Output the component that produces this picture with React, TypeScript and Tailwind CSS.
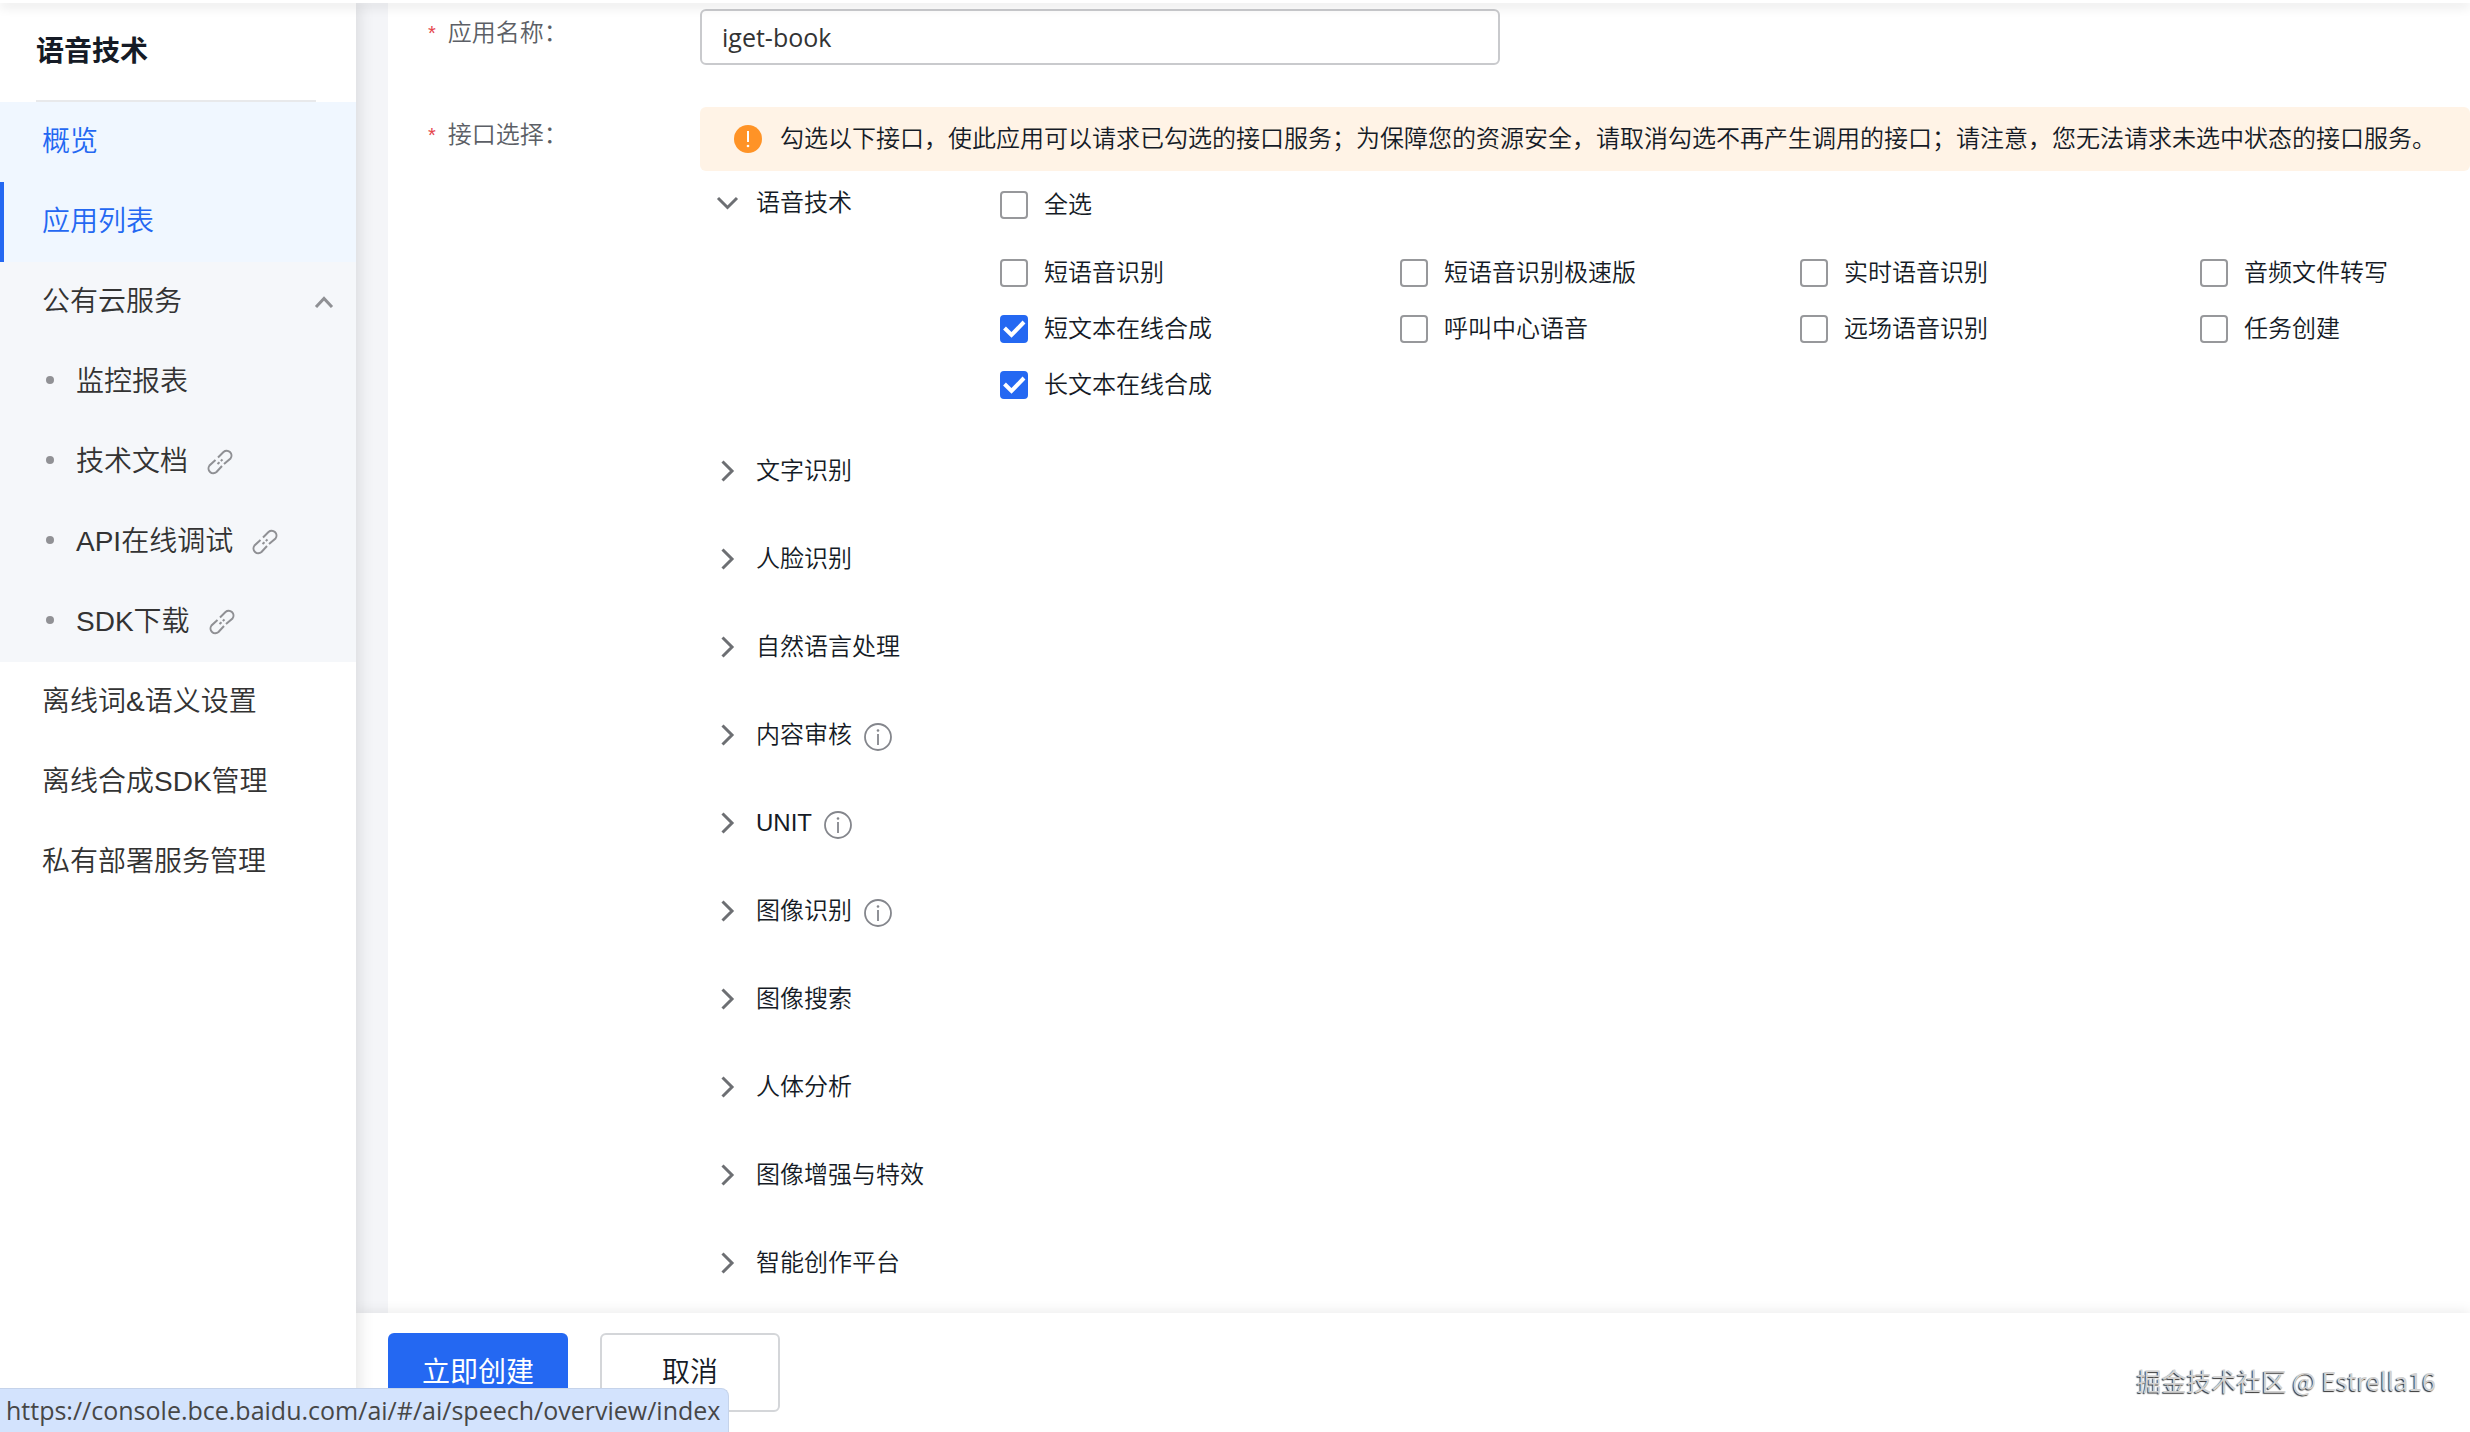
import { useState } from "react";

const SUB_ITEMS = [
  { label: "监控报表", external: false },
  { label: "技术文档", external: true },
  { label: "API在线调试", external: true },
  { label: "SDK下载", external: true },
];

const OTHER_ITEMS = ["离线词&语义设置", "离线合成SDK管理", "私有部署服务管理"];

const SPEECH_APIS = [
  "短语音识别",
  "短语音识别极速版",
  "实时语音识别",
  "音频文件转写",
  "短文本在线合成",
  "呼叫中心语音",
  "远场语音识别",
  "任务创建",
  "长文本在线合成",
];

const GROUPS = [
  { label: "文字识别", info: false },
  { label: "人脸识别", info: false },
  { label: "自然语言处理", info: false },
  { label: "内容审核", info: true },
  { label: "UNIT", info: true },
  { label: "图像识别", info: true },
  { label: "图像搜索", info: false },
  { label: "人体分析", info: false },
  { label: "图像增强与特效", info: false },
  { label: "智能创作平台", info: false },
];

export default function App() {
  const [name, setName] = useState("iget-book");
  const [checked, setChecked] = useState<string[]>(["短文本在线合成", "长文本在线合成"]);

  const toggle = (api: string) =>
    setChecked((prev) => (prev.includes(api) ? prev.filter((a) => a !== api) : [...prev, api]));

  const allChecked = checked.length === SPEECH_APIS.length;

  return (
    <div className="relative flex h-screen flex-col overflow-hidden bg-[#f4f5f8] font-['Liberation_Sans','Noto_Sans_CJK_SC',sans-serif] text-2xl font-[350] text-[#151b26]">
      <header className="relative z-20 h-[3px] shrink-0 bg-white shadow-[0_2px_12px_rgba(0,0,0,0.24)]" />

      <div className="flex min-h-0 flex-1">
        <Sidebar />

        <div className="flex min-w-0 flex-1 flex-col">
          <main className="ml-8 min-h-0 flex-1 overflow-hidden bg-white pl-10 pt-1.5">
            <form>
              <div className="flex items-start">
                <FieldLabel htmlFor="app-name" text="应用名称：" />
                <input
                  id="app-name"
                  type="text"
                  value={name}
                  onChange={(e) => setName(e.target.value)}
                  className="h-14 w-[800px] rounded-md border-2 border-[#c9cacd] bg-white px-5 font-['Open_Sans',sans-serif] text-[25px] font-normal text-[#333] outline-none"
                />
              </div>

              <div className="mt-[42px] flex items-start">
                <div className="pt-1">
                  <FieldLabel text="接口选择：" />
                </div>
                <div className="min-w-0 flex-1">
                  <div className="flex h-16 items-center gap-[18px] whitespace-nowrap rounded-md bg-[#fff3e6] pl-[34px]">
                    <WarnIcon />
                    <p>
                      勾选以下接口，使此应用可以请求已勾选的接口服务；为保障您的资源安全，请取消勾选不再产生调用的接口；请注意，您无法请求未选中状态的接口服务。
                    </p>
                  </div>

                  {/* 语音技术 */}
                  <section className="flex h-64 items-start">
                    <div className="w-[300px] shrink-0 pt-3.5">
                      <GroupButton label="语音技术" open />
                    </div>
                    <div className="flex-1 pt-1.5">
                      <Check label="全选" checked={allChecked} onChange={() => setChecked(allChecked ? [] : SPEECH_APIS)} />
                      <div className="mt-3 grid grid-cols-[repeat(4,400px)]">
                        {SPEECH_APIS.map((api) => (
                          <Check key={api} label={api} checked={checked.includes(api)} onChange={() => toggle(api)} />
                        ))}
                      </div>
                    </div>
                  </section>

                  {GROUPS.map((g) => (
                    <section key={g.label} className="flex h-[88px] items-center gap-3">
                      <GroupButton label={g.label} />
                      {g.info && <InfoIcon />}
                    </section>
                  ))}
                </div>
              </div>
            </form>
          </main>

          <footer className="relative flex shrink-0 items-center gap-8 bg-white py-5 pr-[34px] pl-8 shadow-[0_-2px_12px_rgba(0,0,0,0.08)]">
            <button type="button" className="h-[79px] w-[180px] rounded-md bg-[#2468f2] text-[28px] font-normal text-white">
              立即创建
            </button>
            <button type="button" className="h-[79px] w-[180px] rounded-md border-2 border-[#d4d6d9] bg-white text-[28px]">
              取消
            </button>
            <p className="ml-auto pt-4 font-['Noto_Sans_CJK_SC',sans-serif] text-[25px] font-normal text-[#d2d2d2] [text-shadow:-1px_1px_1px_#333]">
              掘金技术社区 @ Estrella16
            </p>
          </footer>
        </div>
      </div>

      {/* Browser status bubble */}
      <div className="absolute bottom-0 left-0 z-30 flex h-11 items-center rounded-tr-lg border-r border-t border-[#c5d3ea] bg-[#d3e3fd] pl-1.5 pr-2 font-['Open_Sans',sans-serif] text-[25px] font-normal text-[#474747]">
        https://console.bce.baidu.com/ai/#/ai/speech/overview/index
      </div>
    </div>
  );
}

function Sidebar() {
  return (
    <aside className="relative z-10 w-[356px] shrink-0 bg-white text-[28px] text-[#333] shadow-[2px_0_16px_rgba(0,0,0,0.12)]">
      <div className="mr-10 ml-9 flex h-[99px] items-center border-b-2 border-[#e8e9eb]">
        <h1 className="font-bold text-[#151b26]">语音技术</h1>
      </div>
      <nav>
        <a href="#overview" className="flex h-20 items-center bg-[#f0f7ff] pl-[42px] text-[#2468f2]">
          概览
        </a>
        <a href="#apps" className="flex h-20 items-center border-l-4 border-[#2468f2] bg-[#f0f7ff] pl-[38px] text-[#2468f2]">
          应用列表
        </a>
        <div className="bg-[#f5f7fa]">
          <button type="button" className="flex h-20 w-full items-center justify-between pr-[22px] pl-[42px]">
            公有云服务
            <svg width="20" height="12" viewBox="0 0 20 12" fill="none" stroke="#8f9094" strokeWidth="3">
              <path d="M2 11 10 2.500 18 11" />
            </svg>
          </button>
          {SUB_ITEMS.map((item) => (
            <a key={item.label} href="#docs" className="flex h-20 items-center pl-[46px]">
              <span className="mr-[22px] mb-1 size-2 rounded-full bg-[#909195]" />
              {item.label}
              {item.external && <LinkIcon />}
            </a>
          ))}
        </div>
        {OTHER_ITEMS.map((label) => (
          <a key={label} href="#more" className="flex h-20 items-center pl-[42px]">
            {label}
          </a>
        ))}
      </nav>
    </aside>
  );
}

function FieldLabel({ text, htmlFor }: { text: string; htmlFor?: string }) {
  return (
    <label htmlFor={htmlFor} className="flex h-12 w-[272px] shrink-0 items-center gap-3 text-[#5c5f66]">
      <span className="text-xl text-[#e5454c]">*</span>
      {text}
    </label>
  );
}

function GroupButton({ label, open = false }: { label: string; open?: boolean }) {
  return (
    <button type="button" className="flex h-9 items-center gap-4 pl-4">
      <svg width="24" height="24" viewBox="0 0 24 24" fill="none" stroke="#6d6f73" strokeWidth="3">
        <path d={open ? "M2 7 11.500 16.500 21 7" : "M6.500 2.500 16 12 6.500 21.500"} />
      </svg>
      {label}
    </button>
  );
}

function Check({ label, checked, onChange }: { label: string; checked: boolean; onChange: () => void }) {
  return (
    <label className="flex h-14 items-center gap-4">
      <span className="relative flex size-7">
        <input
          type="checkbox"
          checked={checked}
          onChange={onChange}
          className="size-7 appearance-none rounded border-2 border-[#97989b] bg-white checked:border-[#2468f2] checked:bg-[#2468f2]"
        />
        {checked && (
          <svg className="pointer-events-none absolute inset-0" width="28" height="28" viewBox="0 0 28 28" fill="none" stroke="#fff" strokeWidth="4">
            <path d="M4.500 13 11.500 20 24 7" />
          </svg>
        )}
      </span>
      {label}
    </label>
  );
}

function WarnIcon() {
  return (
    <svg width="28" height="28" viewBox="0 0 28 28">
      <circle cx="14" cy="14" r="14" fill="#ff9326" />
      <path d="M14 6v11" stroke="#fff" strokeWidth="2" />
      <circle cx="14" cy="21" r="1.300" fill="#fff" />
    </svg>
  );
}

function InfoIcon() {
  return (
    <svg className="mt-1" width="28" height="28" viewBox="0 0 28 28" fill="none" stroke="#84868c" strokeWidth="1.800">
      <circle cx="14" cy="14" r="13" />
      <path d="M14 11v11" />
      <circle cx="14" cy="7.500" r="1.300" fill="#84868c" stroke="none" />
    </svg>
  );
}

function LinkIcon() {
  return (
    <svg className="ml-[18px]" width="28" height="28" viewBox="0 0 28 28" fill="none" stroke="#8f9094" strokeWidth="2">
      <path d="M12 9.500 17.500 4a4.800 4.800 0 0 1 7 6.500L18 16" />
      <path d="M9.500 12 3.500 17.500a4.800 4.800 0 0 0 7 6.500L16 18" />
      <path d="M11.500 16 13.500 14.200M14.800 13 16.500 11.500" />
    </svg>
  );
}
